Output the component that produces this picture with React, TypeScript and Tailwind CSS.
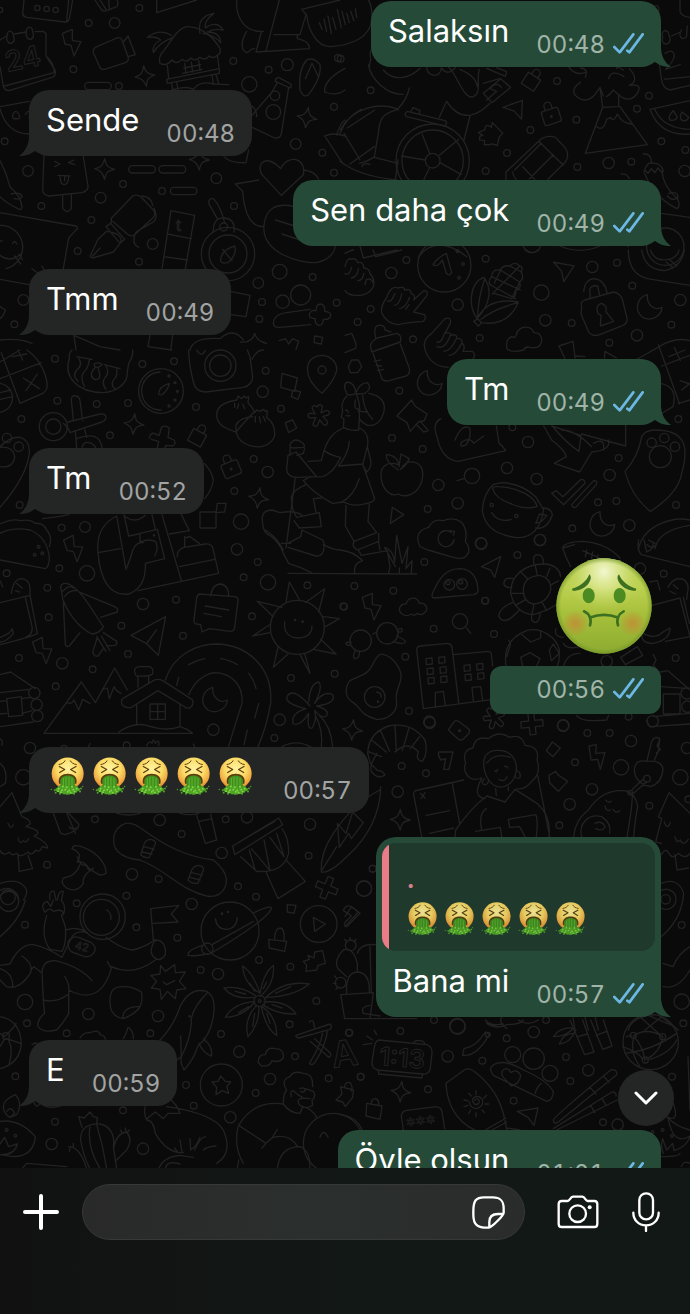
import React, { useId } from "react";

// small shapes that are scattered over the wallpaper, centred on 0,0
const motifs: Record<string, string> = {
  spark: "M0 -30C4 -8 10 -3 30 2C10 6 4 10 0 32C-6 12 -12 6 -30 0C-10 -4 -5 -10 0 -30z",
  bolt: "M-28 -28L2 -40 2 -6 28 -3 7 40 -2 8 -20 4z",
  lock: "M-22 -14H22V26H-22zM-11 -14V-25a11 11 0 0 1 22 0V-14",
  padlock: "M-20 -12H20q6 0 6 6V26q0 6 -6 6H-20q-6 0 -6 -6V-6q0 -6 6 -6zM-12 -12V-24a11 11 0 0 1 22 0V-12M-2 8h4v4h-4z",
  moon: "M-6 -38C-36 -30 -48 8 -20 30C6 44 36 26 38 0C16 12 -8 -6 -6 -38z",
  plus: "M-9 -34H9V-10H33V9H9V32H-9V9H-33V-10H-9z",
  puzzle: "M-32 -20L-10 -22Q-6 -38 6 -28L10 -22 18 -34 36 6 22 14 8 36Q-6 22 -10 26L-28 20-22 8-36 2-32 -8-22 -8z",
  nav: "M-32 -20L30 -20 8 32 -4 2z",
  plane: "M-52 -2L52 -58 30 58 -5 23zM24 -18L-5 23",
  star: "M-6 -28a7 7 0 0 1 14 2L6 -10 20 -18a7 7 0 0 1 8 12L13 0 26 12a7 7 0 0 1-10 11L4 11 0 26a7 7 0 0 1-14-3L-8 6-24 8a7 7 0 0 1-2-14L-11 -5-20 -18a7 7 0 0 1 11-9z",
  pill: "M-29 -11H29a11 11 0 0 1 0 22H-29a11 11 0 0 1 0 -22z",
  cloud: "M-32 22C-48 8 -36 -10 -20 -8C-14 -30 14 -32 20 -10C40 -14 50 8 34 20Q24 28 14 20Q4 30 -4 22Q-18 32 -32 22z",
};

type Scene = {
  at: [number, number];
  lines: string[];
  rings: number[][];
  items?: [string, number, number, number?][];
};

const scenes: Scene[] = [
  {
    // top left: calendar, hut, pen, compass
    at: [0, 0],
    lines: [
      "M72 0L68 42Q70 50 80 52L195 66Q206 66 208 56L218 0M206 0L200 62M285 0L304 28Q308 36 320 32L350 20Q356 14 352 0M300 0l18 28M326 0l2 26",
      "M0 120L20 108M44 102L78 96M106 95L128 94Q138 96 138 104V168L166 212Q168 228 156 232L30 271Q14 274 10 258L0 200M138 168Q164 190 162 218L14 258",
      "M22 100q-6 24 8 30q14 0 12-16l-4-16q-10-10-16 2zM80 88q-6 24 8 30q14 0 12-16l-4-16q-10-10-16 2z",
      "M286 142L350 114Q362 110 366 120L384 170Q388 184 376 188L314 208Q302 210 298 198L280 158Q278 148 286 142zM370 126l14-18l22 56l-22 6",
      "M470 0L470 38L590 0M710 0C706 60 740 98 790 94M838 0L798 152M822 104H900L918 44M740 94C724 120 720 150 740 158C752 156 746 146 764 146M770 156L928 146Q930 124 892 116V104M784 96L768 156",
      "M905 28L920 45C925 90 950 140 990 140C1060 135 1110 110 1115 60Q1118 20 1105 0M905 28L1020 0M958 68l8 20M972 58l8 36M984 48l10 52M998 52l10 36M1012 28l12 56M1026 34l10 40M1040 40l8 28M1052 34l10 28M1066 26l4 26",
      "M480 190Q474 172 488 156C510 130 530 86 560 80C600 78 640 110 660 146Q664 160 652 166Q640 178 628 168Q614 184 600 172Q586 186 572 174Q560 190 546 178Q530 196 516 180Q500 200 480 190z",
      "M502 196l4 40M652 168l6 40M500 238L658 206V220L502 250zM515 250l4 24M530 248l4 20M636 226l4 26M648 224l8 26M516 270Q560 256 580 268Q600 240 640 252L686 254M554 190l4 30M574 186l4 30M596 182l4 30M552 204l50-10M548 220l58-12",
      "M514 106Q480 84 442 112Q468 108 482 120Q454 134 460 158Q476 128 520 112M600 100Q590 48 642 40Q612 60 616 84Q650 60 670 90Q640 84 622 96Q660 96 662 128Q640 104 608 100",
      "M0 320L88 304M0 326Q20 400 86 402M38 346q8 -22 18 -4q8 16 -8 14q-12 2 -10 -10zM76 344q8-16 14 -6M88 336v22",
      "M836 232L872 252Q876 258 870 264L826 244Q824 236 836 232zM832 248L816 276L756 346M866 262L844 402Q840 416 824 414L756 382M756 318Q770 330 770 350",
      "M900 270Q894 210 920 180Q940 170 960 194Q966 230 926 284Q910 296 900 270zM916 236L936 190L956 232M974 276Q970 240 1035 205M974 276Q1010 290 1035 270M1010 405Q1020 370 1035 360M974 408L1028 490M974 408Q1000 396 1035 408",
      "M132 466L128 570Q130 586 148 588L246 578Q266 572 264 558L250 470M188 588L188 624Q200 644 214 626V584M164 484l16 8l-16 8M222 480l-16 8l18 6M174 526L210 528M180 528Q180 552 192 554Q206 552 206 530M194 530v12",
      "M672 470Q690 490 738 488L746 450M0 482Q20 520 30 560Q64 590 66 622Q64 634 50 624Q20 610 0 590M34 582q30-8 32 10q-8 8-24 4",
      "M0 638L228 678Q238 684 226 692L206 714L190 806M0 838L88 854M0 676A66 66 0 0 1 18 806M38 730q6-12 12 2M0 722q4 4 6 0M0 766Q30 790 62 762M44 768l18 24M58 764l10 16M96 806l16 12M126 798l6 12",
      "M270 770L294 718L320 694Q370 700 362 728L340 756L278 774zM278 768L300 744M318 680L332 670L374 718L360 730zM334 668V655L396 590Q410 580 424 592L460 630Q470 642 458 654L404 704Q394 712 382 702L338 664M426 588Q454 590 458 616M462 624Q478 660 452 670L408 696Q392 730 416 742",
      "M513 632L584 646L556 806M513 632L486 806M502 702L574 716M492 770L562 780",
      "M628 614Q622 594 640 596Q660 614 674 668M628 614L652 656M640 696Q638 650 676 654Q708 660 702 696M662 784Q660 752 704 738Q712 764 684 788Q666 792 662 784zM668 748l28 34",
      "M706 552L776 540M706 552L728 574Q736 680 790 680M844 586L786 524C766 490 800 460 842 506C864 460 920 474 910 524zM912 510Q946 514 956 538M884 620Q800 600 792 676C784 760 900 790 950 788Q1000 776 1006 738M826 660L884 678M846 702L900 720",
      "M0 920L16 930Q10 950 0 956M690 874L750 886L738 950L692 944M820 970Q820 944 860 938L930 928M820 970Q822 984 840 982L932 974M932 936q2-6 16-4q0-20 14-20q14 2 12 22q20 2 18 14q-4 12-22 10q-2 20-14 18q-12-4-10-20q-18 0-18-10q0-8 4-10z",
      "M0 1020Q60 1014 96 1030M222 1006L228 1050M222 1006L300 1040L360 1050M450 1006L444 1040L515 1050M518 1004L512 1050M570 1050Q580 1010 660 1016Q700 980 730 1020M722 1026Q756 1030 764 1000Q770 1024 800 1030M838 1022l18-6l10 16l12-16l18 8l-8 24M944 1008l24 4l-4 20l-22-4z",
    ],
    rings: [
      [0, 30, 8], [112, 24, 8], [140, 27, 8], [167, 30, 8], [266, 69, 10], [344, 69, 16], [418, 24, 10], [220, 208, 10], [357, 258, 10],
      [700, 183, 10], [806, 209, 10], [862, 194, 18], [748, 253, 23], [1014, 174, 10], [825, 287, 14], [820, 336, 22], [1002, 320, 10], [887, 432, 16],
      [967, 458, 10], [1002, 518, 10], [14, 424, 10], [84, 513, 16], [369, 552, 10], [302, 593, 16], [124, 618, 10], [274, 660, 10], [486, 573, 10],
      [649, 535, 16], [702, 618, 10], [233, 753, 10], [458, 732, 16], [417, 785, 10], [671, 681, 12], [684, 762, 80], [684, 762, 57], [839, 815, 22],
      [775, 849, 16], [938, 831, 10], [902, 885, 30], [848, 905, 20], [786, 906, 10], [778, 957, 10], [1010, 908, 10], [70, 900, 16], [43, 973, 10],
    ],
    items: [["bolt", 215, 128], ["spark", 435, 227, -8], ["spark", 921, 352, 8], ["spark", 314, 506], ["spark", 598, 478], ["pill", 294, 258], ["pill", 426, 508], ["pill", 517, 508], ["pill", 551, 573]],
  },
  {
    // top right: wheel, pencil, volcano
    at: [1020, 0],
    lines: [
      "M85 195C95 240 140 285 190 283M100 140Q86 156 92 176L88 200M130 210C160 246 210 236 240 205M260 200q0 22 22 26q20 0 22-22M304 204q20 26 42 -2M326 202C350 220 370 300 400 290C426 280 408 240 418 208M360 208Q410 230 412 260M440 205l56 24l4-14l-30-12",
      "M430 280L482 236L512 262L456 308zM440 300l30-26l-20-8q20-24 34-4M450 310Q420 340 390 346Q350 350 320 304L298 352M208 264Q200 300 172 328M390 348L372 420M430 250L478 236",
      "M0 390C40 320 120 306 176 328C124 340 118 360 115 400L103 470M0 400Q20 350 64 328M104 330L22 384M12 400L60 480M103 440L30 492M58 490Q80 486 104 470M0 484Q60 530 170 540M103 472L174 490M66 500q4-14 24-6M174 480L166 538",
      "M205 335L315 362a8 8 0 0 1-5 15L200 350a8 8 0 0 1 5-15zM213 335l5-12l22 8l-2 12M246 402L270 462M356 418L298 466M300 488L364 524M268 504L252 538M256 480L184 468",
      "M498 538L498 516L600 420Q620 404 646 412L676 444Q690 466 676 486L624 538M596 424L670 496M548 500L584 538M518 516Q520 530 528 538M640 464L568 536M604 430L524 510",
      "M686 200Q704 230 740 216M722 246Q688 270 710 290Q744 316 772 274L780 262L790 288M780 262L788 322L836 320V284M800 290Q810 284 820 270L836 284M736 232Q746 206 722 204M836 284Q868 312 890 282Q912 250 868 256M868 256Q900 240 868 206M806 236Q814 206 852 230M850 210Q830 196 830 206M788 322L736 460L922 434L840 320M770 380Q790 396 800 358L812 352Q820 370 832 342Q846 370 874 372",
      "M958 192L964 236Q968 266 990 270L1050 256M974 236Q964 240 1050 230M930 328L1050 302M930 328Q960 410 1050 402M944 328Q970 386 1050 388M1000 332q-18 18 -10 28q14 4 22 -8zM1026 336q-10 20 2 26q14 2 18-10z",
      "M968 110q-4 20 8 22q16 0 14 -18l-6-18q-12-10-18 6zM994 108l28-12M1024 90q-10 20 4 26q14 0 12-18l2-20M1020 0V34Q1024 50 1050 52M975 160q26-16 28 8q-2 16-26 40l44-14",
      "M910 462Q936 460 934 490M912 516Q922 480 944 490Q964 490 970 514M914 510l10 10l10-14l10 12l10-14l10 12M914 520Q940 590 1010 626Q1024 620 1012 596Q970 560 966 514M986 580q28-8 28 12q-14 14-32 -4M844 522Q860 520 868 536M964 640L1050 652M938 20Q960 10 956 34M864 740Q872 684 964 690M60 738L70 774L170 750M236 770Q290 700 380 770M550 740Q560 758 580 758Q598 754 600 740M660 738Q720 764 780 738",
    ],
    rings: [
      [92, 271, 10], [278, 482, 110], [278, 482, 92], [278, 482, 22], [651, 243, 10], [709, 359, 10], [571, 390, 10], [501, 459, 10], [437, 513, 10],
      [712, 501, 10], [806, 489, 17], [874, 485, 10], [891, 326, 10], [927, 287, 10], [964, 424, 10], [1036, 450, 10], [1034, 513, 17], [976, 740, 56], [2, 176, 10], [352, 753, 4],
    ],
    items: [["lock", 576, 240, 33], ["padlock", 631, 340, -18], ["nav", 526, 330, -20], ["puzzle", 452, 406, -20]],
  },
  {
    // left middle: scissors, camera, rocket, sun
    at: [0, 1050],
    lines: [
      "M60 0L0 36M80 0Q126 30 140 92Q146 120 128 130L60 160L4 8M0 86L124 38M36 20l44-8M54 0l14 30M70 84l48 32M112 72L78 122M0 100A44 44 0 0 1 0 187M0 128l32-8M0 148l38-8",
      "M208 26C190 80 230 126 310 128C350 126 384 100 382 66L386 40Q400 20 398 0M208 26Q206 10 216 0M230 20L276 28M236 24Q250 46 230 60Q216 78 234 94M268 30Q264 56 250 68Q240 86 254 110M282 42q16-8 24 2q-8 12-22 6zM286 52q-22 22 -4 36q22 4 16-20l-4-16M312 44L360 56M318 48Q330 70 314 84Q304 100 318 118M350 56Q354 80 340 90Q332 106 344 116",
      "M566 0Q566 40 580 96Q586 124 616 126L730 112Q756 106 758 82L750 20L742 0M756 28Q770 0 790 0M590 0q14 24 26 2",
      "M476 128Q480 108 508 100Q504 120 486 134Q474 136 476 128zM480 66A56 56 0 1 0 484 180",
      "M214 150q0-16 14-12q10 2 12 14l8 60M214 150L220 210M204 216L300 192Q318 190 318 204Q316 212 306 216L210 248Q206 234 190 220M254 238L260 262M226 244L230 294M230 266Q300 240 306 294M246 292q6-22 28-12q12 6 12 14",
      "M0 290Q30 260 60 262Q90 270 88 310Q80 380 0 472M0 350Q40 356 44 320Q40 288 0 292",
      "M448 264q4-20 18-12l12 4l6-24q14-8 24 2l-4 28l18 8q8 10-4 18l-20-2l-4 10M472 294l4-20l-22-6",
      "M760 188Q720 230 708 246C690 240 650 230 650 194Q650 160 710 150L714 138L724 146L732 138L738 144L746 140L744 158Q756 170 764 186M764 188L770 180L780 184L790 178L796 184L802 182L800 202Q826 220 824 256C818 280 790 294 766 290C720 284 706 260 708 226Q716 204 758 200M704 160v12M716 162l-4 14M728 162l6 14M766 200v16M778 200l4 18M790 200l6 14",
      "M966 130Q922 94 922 56C924 24 950 16 966 16C996 18 1012 40 1010 62Q1002 94 966 130zM846 70L892 84L884 124L842 112zM882 120l20 6l-8 22l-20-8l4-18M856 218l22-8l12 24l-24 14z",
      "M0 522Q40 504 60 512Q90 506 106 520Q130 518 140 540Q158 560 148 590M0 550Q40 530 90 540Q140 560 148 620Q148 650 136 656L0 630M128 506Q180 500 206 494",
      "M294 608Q286 530 350 498M294 608L362 596M294 608C300 690 330 740 386 732C420 720 438 690 436 640L494 626L472 538L420 550V576Q450 564 468 576Q476 600 464 618M350 498L378 658Q394 620 398 600Q410 574 430 578M372 494L386 558L416 552M456 494L466 538M486 494L544 692M508 552L568 542L544 494M414 722L656 670L638 592Q630 580 616 582L552 592Q530 600 532 620M538 650L644 628M554 592V560L562 564Q566 554 578 566L598 580M376 500q30 22 60-4M612 340Q634 360 640 390Q636 420 614 446",
      "M600 486L648 486V534H600zM648 488L652 460H678L674 486z",
      "M34 730Q40 686 66 686Q92 690 90 720V734M50 700l16 14M46 722l12 4M0 692L8 710M0 758L90 736L112 850Q100 860 0 884M76 742L96 830Q100 854 76 862M0 862Q34 850 36 836L40 850Q20 876 0 876",
      "M182 710Q186 696 206 702C240 716 270 770 310 830Q300 850 276 852C230 830 200 780 188 746zM188 724q20 -22 32 -10M194 740q14-22 38-18M242 728L344 770Q356 776 352 786L302 802M190 756L196 884Q200 892 208 888L240 848M292 862L278 906Q284 922 294 918L310 896M310 848L350 874Q352 882 346 886L320 888M304 858l26 44M290 860l28 44",
      "M632 738Q636 704 660 702Q686 704 686 740M598 732L704 740Q716 742 714 752L704 832Q702 844 690 844L628 836L606 846L602 824L590 822Q580 820 582 808L590 744Q592 734 598 732zM616 768l70 12M612 790l52 10",
      "M858 756L868 696L898 748M916 758L974 716L956 786M970 800L1018 806L976 830M962 868L1008 912L940 898M900 914L930 970L914 910M834 892L820 952L864 912M810 848L758 858L812 822M820 800L772 754L846 772M854 816Q850 862 894 864Q936 862 936 828",
    ],
    rings: [
      [165, 26, 10], [427, 42, 10], [522, 34, 10], [797, 62, 10], [788, 125, 17], [843, 176, 10], [588, 171, 10], [384, 159, 10], [290, 162, 10], [172, 152, 10],
      [64, 207, 10], [21, 264, 14], [56, 290, 14], [160, 230, 23], [160, 230, 42], [483, 123, 67], [661, 47, 47], [661, 47, 32], [966, 60, 12], [330, 256, 10],
      [761, 327, 10], [803, 366, 17], [703, 423, 10], [59, 465, 10], [185, 533, 10], [255, 531, 16], [723, 515, 23], [711, 598, 17], [773, 636, 10], [731, 682, 10],
      [804, 697, 23], [922, 706, 10], [178, 655, 10], [261, 670, 23], [20, 670, 10], [142, 713, 10], [429, 762, 17], [528, 749, 10], [146, 802, 10], [364, 827, 10],
      [549, 857, 10], [384, 912, 10], [57, 924, 10], [756, 799, 10], [892, 832, 81], [1030, 769, 10],
      [507, 78, 3], [525, 98, 3], [532, 124, 3], [525, 150, 3], [507, 168, 3], [116, 590, 4], [104, 614, 4], [127, 610, 4], [885, 810, 2], [908, 815, 2], [462, 556, 2],
    ],
    items: [["spark", 402, 221, 5], ["lock", 594, 258, 28], ["padlock", 690, 348, -22], ["spark", 776, 443, 8], ["bolt", 221, 596, -5], ["bolt", 128, 902, -5], ["plane", 445, 858], ["star", 956, 198, 6]],
  },
  {
    // hiker, glasses, egg, buildings
    at: [840, 1050],
    lines: [
      "M200 130Q186 100 204 96Q224 100 228 128Q240 98 262 98Q278 116 254 130Q234 134 228 130Q206 140 200 130zM200 138Q180 160 188 182L184 202L192 208L190 232Q210 244 236 240L238 206Q240 190 234 176Q220 180 226 150M230 134Q240 160 240 184L262 186M248 136Q250 180 278 208M266 130Q320 140 312 184Q300 230 262 226Q244 216 238 206M196 180q10 0 8 8M198 196q8 4 12 0",
      "M190 234C150 250 140 280 132 302Q156 318 182 322M240 234Q270 250 262 290L248 344M208 274Q206 310 176 348L248 342L284 446Q282 456 262 460Q220 472 190 456L158 460Q100 430 70 392L90 380M132 302L124 332L84 334M182 322Q160 370 128 380L48 382Q20 380 20 356L24 316L48 306L108 378M262 290L272 330Q276 352 260 366L250 348M36 276q10-12 28 0q12 6 8 16l-36 2q-12-8 0-18zM30 292l0 24M74 296l-4 14l-20 6M46 382L18 594M4 580h28",
      "M78 404Q40 420 34 440Q34 480 50 502L118 488L124 530L58 534L42 512M100 446L108 488M100 446L124 444M66 540L128 570Q136 580 130 604Q124 620 108 618L24 592M66 540L62 560L24 580M-24 480Q-60 480 -52 520Q-50 550 -30 556Q0 580 10 610L26 640Q60 650 94 668M-24 480L0 488Q46 480 66 496M-44 540Q-10 560 10 600",
      "M198 466L196 528L222 574L290 548L264 514L268 462M222 574Q214 590 232 600L296 574V550M236 602L244 616L322 602L330 650L326 668M296 576L300 600M130 584Q160 600 180 600Q220 604 248 632Q220 640 224 668M24 670L410 672M346 650L314 592Q340 600 344 636L350 556L366 640L384 590L378 656L396 632L394 668M358 670V654M238 386Q220 440 182 458",
      "M444 600L420 590C406 560 414 540 446 532Q460 504 490 512Q520 500 544 516Q564 540 556 574Q576 600 560 616Q550 630 520 622zM522 568A24 24 0 1 1 514 548M508 542L524 544L520 556",
      "M464 744Q450 744 460 724C480 680 500 656 540 656C580 658 592 690 594 720Q594 732 580 734z",
      "M278 852L288 848M356 838q14-6 10 6q-8 6-10 0M350 858Q376 868 376 876Q370 886 340 874M214 878q-18-4 -16 4q6 6 14 4M238 904Q240 926 224 926Q216 920 226 902M560 834L572 850",
      "M430 1076L410 900Q410 890 420 888L504 880Q514 882 516 892L536 1058M520 914L626 904Q634 906 634 912L638 948M430 1076L640 1048M466 1068V1028L490 1024L496 1066M580 1052L576 1012L602 1010L608 1050M438 926l18-2 1 18-18 2zM476 922l18-2 1 18-18 2zM441 956l18-2 1 18-18 2zM480 952l18-2 1 18-18 2zM444 984l18-2 1 18-18 2zM482 980l18-2 1 18-18 2zM552 946l18-2 1 18-18 2zM590 942l18-2 1 18-18 2zM555 974l18-2 1 18-18 2zM593 970l18-2 1 18-18 2z",
      "M282 936Q296 906 312 914C340 922 370 960 362 990C350 1030 346 1030 350 1060C350 1090 320 1110 290 1108C240 1096 240 1070 220 1058C190 1040 196 1010 210 992C250 970 260 980 282 936zM290 1026q14 2 14 16",
    ],
    rings: [
      [508, 704, 16], [546, 702, 16], [340, 722, 10], [223, 708, 10], [192, 770, 10], [616, 752, 10], [461, 836, 10], [433, 636, 10], [540, 814, 23],
      [242, 872, 32], [322, 850, 32], [376, 920, 10], [284, 1041, 31], [387, 1083, 10], [448, 1115, 17], [294, 1055, 2], [504, 698, 6], [542, 696, 6],
    ],
    items: [["bolt", 275, 770], ["cloud", 398, 770], ["star", 642, 1104]],
  },
  {
    // right: corn, hands, lock, cup
    at: [1035, 750],
    lines: [
      "M0 50Q6 20 20 28Q34 22 38 38Q56 34 56 54Q76 56 74 70Q90 86 86 108Q70 140 30 136Q10 136 0 122M0 72q14 4 20-20M20 84q18-4 20-28M38 92q16 0 18-22M60 104L64 88Q80 84 84 98",
      "M110 188Q106 170 124 144Q140 104 158 114Q180 108 178 120Q200 116 198 130Q214 136 206 150L236 122Q250 122 246 136L206 186L238 194Q246 206 234 214Q180 218 160 224Q124 220 110 188zM128 152Q138 160 150 130M148 166q16-2 22-34M164 176q18-2 30-34M182 178l10-14",
      "M78 296Q70 280 96 264L156 250Q172 256 166 276L80 306zM92 264Q84 228 100 226Q120 224 120 240L138 246M166 282L192 352Q198 370 184 378L132 392Q114 396 110 384L84 310M88 334l18-4M94 346l16 2M98 362l18-4M0 256L20 250Q40 290 30 296L0 308M20 330H40L50 350L38 368H16L10 350z",
      "M240 298Q230 270 260 250L300 206Q320 200 316 220L300 250Q316 244 318 256Q336 250 336 266Q352 264 352 280Q362 290 354 304L382 304Q394 314 384 326M240 298Q256 350 310 352M276 276q14 4 22-26M276 290q24 10 40 -34M296 304q20 0 38-38M312 316q20 0 38-36",
      "M398 206L386 214L400 228L410 218L398 206M398 206C370 180 370 100 416 82C440 110 440 160 396 206M396 206Q430 140 520 156Q490 230 410 218M408 208Q440 180 518 158M420 84Q400 140 398 200M442 108Q424 100 440 80Q442 56 466 60Q474 44 494 48Q510 32 524 48Q536 50 528 66Q540 84 524 96Q530 116 512 122Q514 140 500 146L446 130M442 108L512 146M440 80L526 120M466 60L524 96M494 48L530 66M524 48L442 132M500 146L524 96M466 62L448 100",
      "M264 44Q276 24 304 10L320 68Q314 80 304 70L292 30Q280 50 268 46zM84 0L92 20L170 0M0 10Q20 0 26 0M540 0q20 16 40 0M850 0Q850 80 920 88L1035 106M890 0Q900 60 960 62Q1010 50 1018 0M916 0Q930 40 980 26Q1000 16 1002 0M964 36l20 18M972 28l24 20",
      "M716 124Q720 88 748 86Q780 90 786 130M736 146L734 118Q740 104 758 108L764 136M710 170Q704 156 720 150L806 126Q826 130 832 148L846 204Q848 220 834 226L764 254Q742 262 730 244L708 192zM758 190Q750 164 770 160Q790 170 782 184L806 214L766 228L768 196L758 190",
      "M486 296Q480 268 500 260Q514 266 514 252C524 224 560 226 566 248Q590 246 590 274Q584 298 556 292Q540 288 536 300Q500 310 486 296zM642 288L684 274L690 324M642 288L660 326M690 318L720 320M778 324L780 304L814 324M872 330L960 280Q1000 262 1035 272M940 284L1004 462M972 320l48-20M988 292l18 40M950 348L1035 316M1006 392l28 10M1010 420L1035 400M1000 460L1035 450M946 400Q1000 410 984 470L950 490",
      "M156 498L200 450L210 468L246 492L238 512L220 516L196 544L186 518zM226 514L250 542L236 546L216 526M288 506Q260 520 276 560Q290 630 340 634L482 602Q474 588 462 580L454 528M330 570Q350 520 374 534Q380 560 364 584Q340 596 350 576Q376 560 386 580L416 558",
      "M160 660Q120 636 124 614Q160 616 162 650L168 612L192 626Q186 644 166 658M160 644C120 630 106 656 108 680C112 720 136 742 160 732Q176 742 196 734C230 720 236 680 232 660C224 632 190 628 172 650",
      "M596 528L620 570Q660 600 664 620L628 640L704 666L740 606Q800 600 790 570M622 528Q660 576 702 604L708 556L620 528M650 540Q690 540 740 590M746 580Q780 560 776 600M842 524V588L710 552",
      "M336 692L356 686M444 704Q416 730 412 780Q420 850 510 862Q580 870 596 780L572 740Q530 700 470 698zM444 718Q440 708 460 710C520 712 570 740 576 770Q540 780 500 762Q450 744 444 718zM594 774Q620 774 622 796Q606 840 572 834M584 792L606 796L590 814L572 820zM440 788Q460 820 500 808",
      "M620 730L634 722L654 740L708 688Q720 688 720 700L656 764zM680 764L746 692Q758 690 754 704L692 772Q682 774 680 764M142 772L176 794L136 820zM840 664Q880 620 890 560Q900 540 930 540Q990 540 1010 570Q1030 600 1010 670Q1000 730 916 784Q860 740 840 664z",
      "M880 898Q890 850 940 824Q990 800 1035 810M930 896Q940 840 1035 826M910 870l20 10M906 884q14 14 28 0",
    ],
    rings: [
      [184, 30, 10], [139, 69, 17], [77, 177, 10], [38, 216, 10], [204, 268, 10], [338, 164, 17], [298, 46, 80], [354, 42, 4], [342, 83, 4], [338, 4, 4], [422, 26, 10],
      [589, 128, 23], [601, 211, 17], [680, 219, 10], [404, 264, 10], [742, 51, 17], [816, 38, 10], [862, 107, 10], [1006, 150, 17], [979, 224, 10], [876, 256, 17], [793, 278, 10],
      [163, 422, 10], [502, 532, 10], [549, 576, 17], [486, 654, 17], [381, 678, 23], [280, 705, 17], [575, 687, 17], [794, 675, 17], [821, 624, 10], [338, 760, 17], [248, 777, 10],
      [409, 881, 17], [585, 870, 17], [682, 835, 10], [853, 826, 17], [759, 757, 10], [814, 753, 10], [993, 765, 10], [1000, 507, 10], [920, 578, 14], [958, 564, 14], [990, 590, 14],
      [946, 620, 33], [440, 765, 5], [514, 798, 5], [141, 564, 10], [233, 597, 10],
    ],
    items: [["moon", 253, 400], ["moon", 913, 172], ["moon", 771, 823], ["nav", 654, 62, 10]],
  },
  {
    // turtle, football, basket
    at: [1320, 1620],
    lines: [
      "M124 80L182 50L164 112L152 90z",
      "M212 160C210 110 250 70 320 72Q360 80 362 110M212 160Q226 220 280 224Q330 210 354 190M250 150Q250 110 300 106Q336 116 332 150Q320 190 280 192Q250 186 250 150zM282 72Q276 44 294 44Q312 46 310 72M220 116Q190 110 192 134Q200 146 216 142M218 188Q180 200 176 228Q186 250 210 236Q230 220 238 210M276 224Q270 246 288 248Q300 240 300 220M240 94l24 24M286 78l6 28M330 84l-10 26M356 122l-26 14M216 160h34M226 196l32-18M276 222l6-30M320 212l-14-26",
      "M368 24Q370 6 430 4Q500 10 540 54M368 24Q376 50 392 80M368 24L404 14M428 32l60 26M440 30l-4 20M458 36l-4 22M474 44l-4 20M596 0Q590 30 604 44L750 80M612 0l8 36Q640 30 640 10",
      "M198 378Q186 300 260 272C300 260 350 290 358 330Q360 360 352 378M246 284L272 306L302 294V272M270 338L300 356L290 378M270 338L242 352L248 378M200 350L212 312L206 300M340 312L358 340L334 362L328 330zM348 266Q340 290 370 292M370 310Q380 330 420 320M420 340Q380 340 370 380",
      "M630 126L652 122L660 150M684 142Q700 110 730 118Q750 130 742 160L740 178M700 134l14 12M690 154l18 8M636 196L720 174L750 290L676 304M730 172L748 250M690 264Q690 300 640 310Q600 310 606 278Q640 300 666 278zM542 352L592 320L608 346L556 374zM640 344L648 360L640 376L652 390M660 396L684 392L750 450M663 440L750 446M670 462h50v60h-50zM640 530L750 520M410 526Q420 548 500 540L506 526",
    ],
    rings: [
      [123, 10, 17], [232, 45, 10], [300, 0, 17], [135, 182, 10], [162, 282, 10], [600, 86, 17],
      [671, 101, 10], [500, 364, 17], [707, 354, 10], [566, 530, 10], [370, 556, 17], [740, 460, 17], [742, 500, 17], [638, 544, 17],
    ],
    items: [["plus", 276, 552, -6]],
  },
  {
    // left: cabin, road, trees, skateboard
    at: [0, 1980],
    lines: [
      "M0 44L32 36L106 86M0 98L86 88M0 124L20 122M0 162L20 160M64 116L92 112M66 160L96 152M0 200L100 186M20 116L64 110L68 166L26 170zM0 236q10 6 6 20M0 310Q24 330 16 370L0 380",
      "M132 220L244 66L286 128L344 24L382 90M132 220H578M200 128Q216 134 222 120L236 150L248 118L270 130M306 90L322 84L328 116L342 80Q350 96 364 100M356 216Q400 186 440 196Q500 216 540 200Q560 206 576 218M410 192V132M540 200V132M414 82V50M446 70V48M368 116L460 62Q474 54 488 62L576 118Q584 130 572 142Q560 148 550 138L474 92L394 142Q376 146 366 134Q362 124 368 116M404 30Q406 20 420 20H448Q462 24 458 42Q450 50 410 48Q404 44 404 30zM450 132h46v46h-46zM473 132v46M450 155h46",
      "M496 60C520 -16 590 -48 650 -48C740 -46 820 20 812 130Q800 200 774 260M530 76L536 52M566 104Q590 50 640 38C700 38 730 80 726 130Q700 210 686 260M566 14Q590 0 614 -4M662 -4Q690 0 712 14M746 40Q762 60 768 86M776 130L764 174M742 210L732 254",
      "M930 138Q880 80 862 108Q850 130 918 146Q870 160 880 192Q900 200 926 160Q920 210 936 204Q952 180 944 152Q970 180 980 166Q990 150 950 138Q1010 130 998 104Q970 90 944 130Q970 80 956 66Q930 70 926 126M946 166Q970 210 964 262M958 166Q994 200 998 262M846 260Q890 236 934 262",
      "M440 258Q446 240 456 250Q460 230 466 250Q480 234 476 256M270 250l-4 10M580 252l4 10",
      "M0 440L36 398L66 470Q94 480 90 492L78 500Q120 510 112 522L102 528Q146 550 142 564L126 560Q120 580 108 570Q94 590 84 576Q60 596 50 580Q34 590 28 576Q10 590 0 572M24 490q8 22 16 4M54 534q4 22 16 8q8 10 16-6M54 584L58 634L98 626L84 586M160 460L182 520L196 524M200 458L226 520M196 524Q240 510 236 492L204 458M208 500q4 10 20 4",
      "M216 566Q220 550 250 562C300 580 320 620 318 640Q300 650 290 640L270 628Q250 600 232 606Q250 580 216 566M232 590Q240 620 260 616Q266 640 280 624M240 614Q226 650 190 654Q180 670 200 684Q230 700 250 670Q246 650 270 632M0 670Q60 650 80 690Q80 710 70 720M0 692A36 36 0 0 1 56 720M150 720Q146 690 162 694L168 720M172 720Q176 690 190 694L184 720",
      "M376 490Q400 486 430 510C500 560 560 590 640 600Q690 640 676 680Q660 714 620 708C540 690 500 630 420 600Q330 590 342 526Q350 500 376 490zM430 560q4-22 22-22q18 4 14 14l-18 40q-14 4-26-8zM426 576l30 6M432 560l30 8M572 640q4-22 24-24q18 4 14 14l-16 40q-18 2-30-10zM570 652l30 8M576 638l30 8",
      "M590 466L616 550L650 540L632 462M540 460q30 8 56 0M598 484L636 476M350 460Q386 470 420 460M698 558L836 474L848 494L704 584zM698 558L824 484M722 590L770 634Q850 640 866 580Q866 530 846 506M748 570L766 632M754 566L810 632L792 540M810 532L852 590L830 520M798 636L834 716L916 664L860 602",
      "M1140 390Q1060 430 1000 520Q960 580 964 636Q990 640 1040 590Q1140 500 1142 380M1012 490L1038 520L1058 456L1090 488L1054 536L1046 520L1018 562L1014 510zM966 630L1010 560",
    ],
    rings: [
      [187, 10, 17], [278, 28, 10], [167, 79, 10], [103, 99, 17], [110, 134, 17], [112, 168, 17], [640, 209, 17], [839, 179, 17], [823, 234, 10], [873, 54, 10], [1004, 41, 10],
      [90, 264, 17], [380, 256, 10], [192, 266, 10], [70, 352, 23], [285, 478, 10], [479, 480, 17], [545, 522, 10], [677, 478, 10], [741, 472, 17], [930, 493, 17],
      [665, 579, 17], [926, 587, 10], [1118, 626, 10], [1092, 686, 23], [396, 643, 17], [476, 657, 10], [714, 679, 10], [141, 614, 10], [379, 707, 10], [768, 710, 10], [24, 712, 22],
    ],
    items: [["moon", 644, 120], ["spark", 1058, 209, 5], ["plus", 980, 684, 22]],
  },
  {
    // right lower: croissant, woman, avocado
    at: [1035, 2160],
    lines: [
      "M76 130L68 100Q70 40 130 18Q200 4 240 60Q250 100 232 124Q210 120 220 96Q190 60 150 96M76 130L96 150M68 94L110 110M80 60L124 96M106 30L134 94M150 14L154 94M192 24L172 92M224 50L196 86M96 100Q70 140 80 156Q100 180 120 164Q110 150 98 152",
      "M282 96H324L312 148H296L302 116L288 120Q276 104 282 96zM310 30L328 4Q334 0 340 4L372 28Q376 36 370 42L354 58Q348 62 340 58z",
      "M410 174C370 190 350 150 362 130Q350 90 384 84Q390 46 430 56Q460 30 494 52Q530 40 540 76Q586 80 576 120Q590 160 560 184Q540 210 516 206M416 130C416 90 450 90 470 92C500 96 516 120 514 150C510 190 480 206 456 200C430 190 416 160 416 130zM424 130Q450 96 496 112M418 176q-12 14 0 18q14 0 12-16M514 150q16 8 10 24q-10 4-16-6M450 152q4 8 8-4M478 140q8-4 10 4M462 178q16 10 24-8M410 176Q380 230 420 236",
      "M426 228L480 246L510 208L576 250Q620 290 612 350M452 206L454 226M490 200V212M426 228Q380 260 332 330L330 350M424 266Q400 280 410 330M392 334L466 322L470 350M490 298L572 284Q580 300 574 350M490 298L494 322L524 320L540 350M578 166L614 350M206 224Q204 212 220 210L356 180M206 224L230 350M322 190L344 310M244 286l70-14M254 340l72-16M226 220l14 14M240 218l-12 18",
      "M604 92L622 66L646 84L624 110zM612 166L632 154L638 164L668 184L640 214L614 188zM732 78L754 74L752 100L780 98L766 148L758 118L738 120zM920 64Q930 46 944 56L940 94L928 120M920 64L906 122M944 60l-8 18l10 10l-12 12M868 150Q870 116 908 124Q950 120 954 148Q950 190 916 200Q870 190 868 150zM862 208L896 176M866 220L904 186M848 216L862 222M904 0L914 20L1035 12",
      "M686 350Q690 300 730 270Q770 210 830 212Q870 210 878 260Q870 300 866 350M862 224Q862 260 846 350M710 350C700 310 730 280 770 290Q800 310 794 340M750 310q20 -10 30 10q-4 16-28 6M780 258q4 18 16 12M804 268q10 14 20 4M782 240q6 10 16 4",
      "M972 218L1035 280M972 218L940 290L950 296L932 366L950 370M958 306q8 26 18 2M990 350q4 22 16 10q8 20 24-2M950 404Q960 380 972 400Q982 420 1000 400Q1020 420 1035 400M990 404L996 450L1030 444M948 490Q1000 470 1016 520Q1010 600 948 650M948 512A30 30 0 1 1 948 564M1035 680Q1000 700 984 740L954 730M954 800Q1000 810 1035 750",
      "M0 590L20 560L40 576L0 620M470 890Q460 910 486 926M520 900q30 20 60 0M690 930L684 894M730 930L720 892M760 930L750 890M850 930Q860 890 930 884M900 930L950 890M948 890L1000 930",
    ],
    rings: [
      [254, 8, 17], [170, 138, 10], [243, 160, 10], [158, 215, 17], [654, 17, 17], [727, 39, 10], [794, 39, 10], [858, 63, 17], [690, 127, 10], [828, 142, 23], [741, 208, 17], [674, 253, 17],
      [643, 316, 10], [913, 257, 10], [1006, 172, 23], [1026, 84, 17], [906, 176, 10], [856, 218, 7], [1030, 238, 10], [83, 446, 10], [57, 506, 23], [962, 538, 14], [1010, 615, 10],
      [1010, 845, 23], [338, 920, 23], [344, 32, 3],
    ],
    items: [["spark", 166, 298]],
  },
  {
    // lower left: astronaut, planet, flower, whale, cactus
    at: [0, 2700],
    lines: [
      "M0 110Q60 60 76 0M134 36Q120 10 142 4L152 20L160 0M136 36Q150 20 160 34Q190 24 190 44Q200 20 184 0M140 46Q120 110 150 148L186 154Q200 130 196 80L184 44M196 90L216 86Q240 84 256 94M320 30Q336 40 332 58M0 196L30 192Q60 130 100 134Q140 142 186 172L216 110Q230 90 262 98M318 112Q370 150 400 150Q440 140 466 118M30 192L40 172M66 168Q100 190 92 218Q60 270 20 260L0 240M0 206Q40 220 38 260M92 210L102 200L122 216M126 214Q130 180 166 182Q240 200 276 242M126 214L130 300Q170 310 206 282Q210 250 194 230M206 270Q300 320 334 206L322 184M334 200Q400 230 466 180M130 300L134 340Q110 360 114 380Q130 400 170 390Q190 370 206 340V284",
      "M452 26L536 16L514 42L534 66L460 70M452 26L460 120M456 140Q460 116 480 122Q500 136 496 164Q480 190 460 170Q450 160 456 140M204 126Q216 106 236 112L274 128Q290 140 284 154Q276 172 254 170L216 156Q202 146 204 126z",
      "M646 56Q650 88 680 88Q710 86 712 52M762 38Q816 12 814 26Q800 60 636 158M608 136Q560 150 564 166Q580 170 622 162M636 134L760 64M940 52L944 94L976 72zM1030 32Q1036 12 1054 20L1080 40L1040 80Q1030 76 1036 66L1054 48L1044 40z",
      "M806 118L860 124L854 154L808 144zM824 116Q824 86 840 84Q854 84 852 120M862 14L888 16L882 40L862 36zM910 184L928 178L924 166L942 174L944 156L968 152L976 190L954 196L950 210L918 214L920 196z",
      "M482 196L496 214L524 194L526 218L556 216L538 244L558 266L530 270L526 296L502 274L484 298L480 268L454 264L470 244L452 226L480 222zM490 246L500 254L524 242M330 306Q328 270 350 262Q390 254 424 276Q430 300 420 320Q410 340 370 356Q330 350 330 306zM368 354Q370 318 420 320",
      "M780 280Q730 250 728 198Q760 220 780 280Q790 220 820 196Q826 250 780 290M796 294Q850 240 928 252Q880 290 800 292M792 306Q860 300 888 342Q830 344 788 314M786 320Q830 350 830 406Q800 390 784 322M776 320Q780 370 744 410Q730 360 768 318M764 306Q730 350 676 352Q700 310 764 304M762 292Q700 300 672 264Q720 256 766 286M750 250l14 24M800 246l-10 20M826 280l46-20M816 314l30 10M800 340l10 30M764 340l-6 40M746 320l-30 18M706 274l30 8",
      "M480 420Q520 380 540 320Q570 260 620 274Q650 290 640 350Q630 410 594 438Q580 480 552 510Q540 490 544 470L530 480M624 276Q570 330 574 370Q570 420 544 470M544 470L542 408M596 430Q610 460 634 468Q640 440 610 416M240 414Q250 396 270 398Q296 386 300 404Q316 408 316 418M370 416Q380 400 384 382Q400 390 400 416",
      "M0 350Q60 360 64 430Q60 490 0 506M0 400L14 410L24 400Q44 380 48 370M20 416L62 430M26 420Q40 450 28 490M14 416L0 440",
      "M888 406L990 372Q998 380 990 388L896 414Q886 412 888 406zM928 366Q936 358 940 366L944 386M968 400Q960 440 928 490Q934 498 944 488Q976 440 982 394M930 424Q950 440 986 472Q996 468 990 458L944 416",
      "M774 486Q776 462 796 464Q800 440 826 446Q852 446 850 472Q840 490 816 482Q810 500 784 498zM662 528L676 544L692 546L680 560L686 580L666 572L648 584L650 562L636 546L654 544z",
      "M1022 284L1120 278L1110 356H1034zM1040 280Q1036 216 1074 216Q1110 220 1108 276M1072 214V190Q1060 140 1030 150Q1000 180 1014 206L1040 230M1072 160Q1080 130 1130 134M1110 140L1114 278M1040 126l-6-8M1050 120V112M1062 126l6-8M1010 236l-6-8M1008 250h-8M1014 262l-6 6M1110 316Q1080 320 1090 340L1140 348M1110 356H1250",
      "M10 620Q10 600 46 584Q70 610 50 644L30 652Q10 640 10 620zM20 634Q34 616 44 640L32 650M0 664Q60 656 106 710Q100 770 40 770L0 764M0 732L14 712L26 740M26 740L52 732Q44 766 0 764M96 434l10-6l10 8M100 600q8 30 20 10q30 20 66 6",
      "M236 650L252 654L270 636L280 650L292 652L290 672M236 650L246 682M242 720C240 680 270 670 300 672C340 680 344 720 340 740L350 806M242 720Q250 770 270 806M270 680Q260 740 300 806M290 674Q310 740 320 806M342 740Q350 700 380 696Q400 720 380 750L350 780M206 740Q240 740 260 806M208 754L212 740M220 730v10M362 690l4 8M376 684l2 10M388 690l-6 8",
      "M436 620Q430 640 440 660Q460 660 466 700Q500 760 550 758M440 656L466 636L490 656L504 640L540 640Q530 610 500 590M500 620Q640 640 670 690Q700 760 650 790M524 744L534 758M540 720L546 756M570 716L572 750Q590 740 600 712M584 750Q600 712 616 710M610 750Q620 740 648 738M476 806Q490 770 540 766L580 772M496 806Q500 780 540 792M66 806L80 790L200 800",
      "M850 612Q760 600 716 676L798 730L816 714L832 688M714 680Q700 740 730 790M798 730L786 744M820 712Q870 700 892 740M850 612Q850 580 860 570Q840 540 870 530Q880 510 910 520Q940 520 938 560M850 612Q870 640 900 640L908 620M874 590Q870 570 880 572Q900 590 906 590M900 566q10-6 16 4q-4 10-14 4M916 566L940 574Q950 590 936 600L938 616Q920 630 900 616Q886 600 906 594L930 596M910 620Q940 630 950 652M832 806Q840 740 900 740Q930 750 930 806M712 806L716 780M960 712q10-30 24 0",
      "M1008 600L1026 582L1022 560L1060 570L1058 592L1036 620L1028 606zM1034 560Q1036 544 1050 548Q1060 560 1054 574M1116 430L1090 434M1118 420L1100 408M1130 404L1122 390",
    ],
    rings: [
      [26, 4, 30], [304, 52, 54], [308, 50, 68], [75, 74, 10], [230, 10, 10], [409, 82, 10], [532, 113, 10], [575, 12, 17], [690, 93, 87], [622, 146, 17], [666, 41, 2], [684, 36, 2], [956, 72, 55],
      [777, 180, 10], [602, 210, 10], [654, 222, 17], [871, 200, 10], [1052, 136, 16], [1022, 248, 16], [949, 303, 10], [869, 373, 10], [663, 402, 10], [718, 455, 17], [1047, 398, 10],
      [885, 469, 10], [75, 306, 23], [265, 342, 17], [81, 370, 10], [200, 400, 10], [474, 348, 17], [451, 400, 10], [779, 303, 17], [779, 303, 4], [664, 555, 63], [558, 555, 10], [810, 537, 17],
      [767, 579, 10], [986, 535, 10], [1082, 530, 10], [581, 617, 10], [691, 652, 17], [369, 631, 10], [165, 665, 10], [155, 732, 17], [429, 746, 17], [46, 529, 10], [18, 408, 10], [1000, 730, 90],
      [20, 690, 4], [46, 707, 4], [569, 349, 2],
    ],
  },
  {
    // lower right: clock, globe, chopsticks, surfboard
    at: [1020, 3060],
    lines: [
      "M116 60L260 74Q278 80 276 100L270 150Q264 164 246 162L112 150Q94 144 96 124L104 76Q108 62 116 60zM222 68Q224 60 240 62Q256 64 254 74M116 150V162L246 174L248 162",
      "M372 86L368 106Q410 110 446 46M372 86Q410 80 436 36L450 44M440 10Q470 30 500 14Q540 14 550 0M436 0Q450 20 490 12M640 50Q660 20 700 24Q680 50 640 50M700 40Q670 40 658 72Q690 70 708 30M690 0L734 104L762 96L728 0M752 0L788 88L816 78L790 0M714 50L742 42M768 46L800 34",
      "M470 130Q440 140 460 166L620 244Q640 240 640 214Q620 180 550 150Q500 120 470 130zM514 198L488 170Q480 150 498 146Q510 148 512 158Q530 144 542 166Q540 190 514 198zM586 220Q590 200 604 190",
      "M318 190L376 148Q390 142 410 160C470 210 490 260 500 330M318 190C320 240 340 300 404 330M436 330L498 294M456 330L500 306M500 324L540 330M404 240q8-8 14 2q0 14-14 10q-12-10-2-20q16-8 26 8q2 20-18 26q-20-2-22-20M408 212v12M386 220l8 8M372 240l12 2M372 260l12-4M386 280l6-10M408 290v-12M434 278l-8-8M446 252h-12M440 226l-8 8",
      "M184 290Q184 276 196 272L288 260Q304 262 306 276L314 326M184 290L190 330M640 300Q640 292 812 150Q832 146 830 164L652 308Q640 312 640 300zM790 168L808 188M750 202L768 222M640 326L816 216Q830 216 828 228M650 330L832 240M752 256L764 278M786 236L798 256M532 274L594 264L582 316L564 292zM80 250L126 258L120 298L78 288zM94 250Q94 236 108 236Q118 242 116 254M0 284Q50 290 66 330",
      "M880 48Q910 80 914 118M880 48Q920 20 968 50M968 50Q960 100 914 120M860 50L874 46M880 58Q870 100 900 140M930 118Q990 100 1010 60M848 80Q900 100 906 116M856 100Q940 90 1010 40M900 -10L960 44M920 -16L1004 20M984 294Q1010 320 1050 330M984 294Q1000 380 1050 348M980 290Q1020 310 1000 250M964 410Q1020 410 1020 400M970 400Q960 380 968 356L980 390L998 370L1002 392Q1040 380 1050 350M1044 110L1050 270M1024 440Q1030 420 1050 430",
    ],
    rings: [
      [28, 38, 10], [181, 33, 10], [352, 18, 23], [443, 44, 7], [500, 55, 10], [581, 36, 17], [323, 109, 17], [427, 122, 10], [518, 104, 24], [581, 116, 32], [630, 160, 24], [678, 111, 10],
      [745, 151, 17], [691, 183, 10], [521, 242, 10], [62, 170, 10], [264, 208, 10], [932, 66, 83], [880, 46, 9], [968, 50, 9], [916, 120, 9], [996, 170, 10], [789, 307, 10], [833, 314, 17],
      [1030, 10, 10], [968, 330, 4], [996, 348, 4], [938, 336, 4], [618, 0, 10], [282, 0, 10],
    ],
    items: [["spark", 183, 214, 5]],
  },
];

const Wallpaper = () => (
  <svg
    className="absolute top-0 left-0 w-full"
    viewBox="0 0 2070 3504"
    fill="none"
    stroke="#222222"
    strokeWidth="4"
    strokeLinejoin="round"
    strokeLinecap="round"
    aria-hidden="true"
  >
    {scenes.map((scene, i) => (
      <g key={i} transform={`translate(${scene.at[0]} ${scene.at[1]})`}>
        {scene.lines.map((d, n) => (
          <path key={n} d={d} />
        ))}
        {scene.rings.map(([cx, cy, r], n) => (
          <circle key={n} cx={cx} cy={cy} r={r} />
        ))}
        {scene.items?.map(([name, x, y, turn = 0], n) => (
          <path key={n} d={motifs[name]} transform={`translate(${x} ${y}) rotate(${turn})`} />
        ))}
      </g>
    ))}
    <g fontFamily="Inter, sans-serif" fontWeight="600" strokeWidth="3">
      <text x="22" y="216" fontSize="84" transform="rotate(-12 22 216)">24</text>
      <text x="222" y="2846" fontSize="34" fontWeight="400" strokeWidth="2" transform="rotate(14 222 2846)">42</text>
      <text x="1136" y="3194" fontSize="76" transform="rotate(5 1136 3194)">1:13</text>
      <text x="528" y="692" fontSize="54" fontWeight="400" fontFamily="Liberation Serif, serif">t</text>
      <text x="1000" y="3204" fontSize="108" transform="rotate(-8 1000 3204)">A</text>
      <text x="1220" y="3398" fontSize="60" fontWeight="400" strokeWidth="2" transform="rotate(-6 1220 3398)">***</text>
    </g>
  </svg>
);

const splat = [
  [22, 98, 6], [32, 103, 6], [43, 105, 7], [55, 106, 7], [66, 104, 7], [77, 101, 6], [85, 97, 5], [28, 92, 6], [40, 94, 7], [54, 94, 8], [68, 94, 7], [79, 91, 5],
  [14, 99, 3], [93, 94, 3], [98, 88, 2], [4, 97, 2], [17, 107, 3], [90, 103, 3], [50, 110, 3], [30, 110, 3], [72, 110, 3],
];

const flecks = [
  [26, 95], [36, 99], [46, 98], [58, 100], [70, 98], [80, 95], [33, 105], [62, 107], [74, 104], [50, 90], [38, 88], [66, 89], [24, 102], [53, 104],
];

const SickEmoji = ({ className }: { className: string }) => {
  const id = useId();
  return (
    <svg className={className} viewBox="0 0 102 113" role="img" aria-label="Face vomiting">
      <defs>
        <radialGradient id={id} cx="0.5" cy="0.35" r="0.66">
          <stop offset="0" stopColor="#fff4a0" />
          <stop offset="0.5" stopColor="#fbdc66" />
          <stop offset="0.82" stopColor="#f0a840" />
          <stop offset="1" stopColor="#d47f22" />
        </radialGradient>
      </defs>
      <circle cx="53" cy="49" r="48" fill={`url(#${id})`} />
      <g fill="none" stroke="#5f3c10" strokeWidth="4" strokeLinecap="round" strokeLinejoin="round">
        <path d="M27 22C35 21 42 17 45 11M61 11C64 17 71 21 79 22" strokeWidth="3" />
        <path d="M28 28L44 37L29 46M78 28L62 37L77 46" />
      </g>
      <path d="M27 80C22 58 38 50 53 50C68 50 84 58 79 80z" fill="#5d3a0e" />
      <path d="M32 82C26 62 40 55 53 55C66 55 80 62 74 82L82 98H22z" fill="#3f8f1f" />
      <path d="M40 64V88M48 60V90M57 60V88M66 64V90" stroke="#62b52f" strokeWidth="3" strokeLinecap="round" />
      {splat.map(([x, y, r], i) => (
        <circle key={i} cx={x} cy={y} r={r} fill="#4fa426" />
      ))}
      {flecks.map(([x, y], i) => (
        <circle key={i} cx={x} cy={y} r="3" fill="#83d544" />
      ))}
    </svg>
  );
};

const NauseatedEmoji = () => (
  <svg className="mr-[9px] size-24" viewBox="0 0 288 288" role="img" aria-label="Nauseated face">
    <defs>
      <linearGradient id="face" x1="0" y1="0" x2="0" y2="1">
        <stop offset="0" stopColor="#b3cb4c" />
        <stop offset="0.3" stopColor="#bdd150" />
        <stop offset="0.6" stopColor="#a5bf3a" />
        <stop offset="1" stopColor="#8dab31" />
      </linearGradient>
      <radialGradient id="shine" cx="0.5" cy="0.14" r="0.42">
        <stop offset="0" stopColor="#f4f7d0" />
        <stop offset="0.4" stopColor="#e3eda0" stopOpacity="0.7" />
        <stop offset="1" stopColor="#c3d75e" stopOpacity="0" />
      </radialGradient>
      <radialGradient id="rim" cx="0.5" cy="0.5" r="0.5">
        <stop offset="0.9" stopColor="#6b9024" stopOpacity="0" />
        <stop offset="1" stopColor="#6b9024" stopOpacity="0.6" />
      </radialGradient>
      <radialGradient id="cheek">
        <stop offset="0" stopColor="#c48a34" stopOpacity="0.85" />
        <stop offset="1" stopColor="#c48a34" stopOpacity="0" />
      </radialGradient>
    </defs>
    <circle cx="144" cy="144" r="143" fill="url(#face)" />
    <circle cx="144" cy="144" r="143" fill="url(#shine)" />
    <circle cx="144" cy="144" r="143" fill="url(#rim)" />
    <circle cx="58" cy="196" r="40" fill="url(#cheek)" />
    <circle cx="230" cy="196" r="40" fill="url(#cheek)" />
    <ellipse cx="98" cy="113" rx="18" ry="23" fill="#4c8a22" />
    <ellipse cx="191" cy="113" rx="18" ry="23" fill="#4c8a22" />
    <g fill="#3d7020">
      <path d="M48 92C72 86 92 70 100 49C106 54 106 64 99 74C88 90 70 98 50 98z" />
      <path d="M241 92C217 86 197 70 189 49C183 54 183 64 190 74C201 90 219 98 239 98z" />
    </g>
    <path
      d="M84 160C100 167 108 184 102 202M203 160C188 167 180 184 186 202M105 178C128 168 160 168 183 178"
      fill="none"
      stroke="#3d7020"
      strokeWidth="8"
      strokeLinecap="round"
    />
  </svg>
);

const Ticks = () => (
  <svg className="mb-[3px] h-[21px] w-[31px]" viewBox="0 0 93 63" fill="none" stroke="#6cb7e3" strokeWidth="8" strokeLinecap="round" strokeLinejoin="round" role="img" aria-label="Read">
    <path d="M4 42L20 58L61 4M43 53L49 58L89 4" />
  </svg>
);

const Time = ({ value, mine }: { value: string; mine?: boolean }) => (
  <span className={mine ? "flex items-end gap-2 text-[#a0b4a8]" : "flex items-end text-[#a2a4a3]"}>
    <time className="text-[24px] leading-6 tabular-nums">{value}</time>
    {mine && <Ticks />}
  </span>
);

const Tail = ({ mine }: { mine?: boolean }) => (
  <svg
    className={mine ? "absolute -right-[10px] bottom-0 h-5 w-5 text-[#264a38]" : "absolute bottom-0 -left-[10px] h-5 w-5 -scale-x-100 text-[#242625]"}
    viewBox="0 0 20 20"
    fill="currentColor"
    aria-hidden="true"
  >
    <path d="M0 0H10C10 8 13 15 20 20C13 20 8 18 4 15L0 17z" />
  </svg>
);

type BubbleProps = {
  time: string;
  mine?: boolean;
  quote?: React.ReactNode;
  children: React.ReactNode;
};

const Bubble = ({ time, mine, quote, children }: BubbleProps) => (
  <li
    className={
      mine
        ? "relative mt-6 self-end rounded-[20px] bg-[#264a38]"
        : "relative mt-[23px] self-start rounded-[20px] bg-[#242625]"
    }
  >
    {quote}
    <div className="flex items-end justify-between gap-[27px] px-[17px] py-[10px]">
      <p className="mb-[6px] flex h-10 text-[31px] leading-10 text-white">{children}</p>
      <Time value={time} mine={mine} />
    </div>
    <Tail mine={mine} />
  </li>
);

const five = [0, 1, 2, 3, 4];

const Quote = () => (
  <div className="px-[6px] pt-[6px]">
    <blockquote className="flex overflow-hidden rounded-[14px] bg-[#1f392c]">
      <div className="w-[7px] bg-[#e97c86]" />
      <div className="pt-5 pb-4 pl-[18px]">
        <p className="text-[26px] leading-8 font-semibold text-[#d9808a]">.</p>
        <p className="mt-[7px] flex gap-[7px]">
          {five.map((n) => (
            <SickEmoji key={n} className="h-[33px] w-[30px] opacity-90" />
          ))}
        </p>
      </div>
    </blockquote>
  </div>
);

const Composer = () => (
  <footer className="relative bg-linear-to-r from-[#111111] to-[#121816] to-50% pt-4 pr-[30px] pb-[74px] pl-[23px]">
    <form className="flex items-center" onSubmit={(e) => e.preventDefault()}>
      <button type="button" aria-label="Attach" className="mr-[23px]">
        <svg className="size-9" viewBox="0 0 36 36" fill="none" stroke="#fff" strokeWidth="4" strokeLinecap="round">
          <path d="M18 2V34M2 18H34" />
        </svg>
      </button>
      <div className="flex h-14 min-w-0 flex-1 items-center rounded-full border border-[#363938] bg-linear-to-r from-[#292929] via-[#2b2f2e] to-[#292c2b] pr-[19px] pl-6">
        <input aria-label="Message" className="min-w-0 flex-1 bg-transparent text-[31px] text-white outline-none" />
        <button type="button" aria-label="Stickers">
          <svg className="size-[33px]" viewBox="0 0 99 99" fill="none" stroke="#fff" strokeWidth="7" strokeLinejoin="round">
            <path d="M4 46C4 14 12 4 36 4H62C86 4 95 14 95 38V50C95 58 60 94 50 95C16 96 4 86 4 56zM52 94V78C52 60 62 54 78 54H94" />
          </svg>
        </button>
      </div>
      <button type="button" aria-label="Camera" className="ml-8">
        <svg className="h-[34px] w-[42px]" viewBox="0 0 126 102" fill="none" stroke="#fff" strokeWidth="7" strokeLinejoin="round">
          <path d="M14 18H32C38 18 40 6 48 5H76C84 6 86 18 92 18H112Q121 18 121 28V86Q121 96 112 96H14Q5 96 5 86V28Q5 18 14 18z" />
          <circle cx="62" cy="56" r="25" />
          <circle cx="98" cy="37" r="6" fill="#fff" stroke="none" />
        </svg>
      </button>
      <button type="button" aria-label="Record" className="ml-[33px]">
        <svg className="h-10 w-7" viewBox="0 0 84 120" fill="none" stroke="#fff" strokeWidth="7" strokeLinecap="round">
          <rect x="22" y="4" width="41" height="78" rx="20" />
          <path d="M4 62C4 84 20 100 42 100C64 100 80 84 80 62M42 100V117" />
        </svg>
      </button>
    </form>
  </footer>
);

export default function App() {
  return (
    <div className="flex h-screen flex-col bg-[#0a0a0a] font-['Inter',sans-serif]">
      <main className="relative min-h-0 flex-1 overflow-hidden">
        <Wallpaper />
        <ol className="relative -mt-[23px] flex flex-col px-[29px]">
          <Bubble mine time="00:48">Salaksın</Bubble>
          <Bubble time="00:48">Sende</Bubble>
          <Bubble mine time="00:49">Sen daha çok</Bubble>
          <Bubble time="00:49">Tmm</Bubble>
          <Bubble mine time="00:49">Tm</Bubble>
          <Bubble time="00:52">Tm</Bubble>
          <li className="mt-11 mb-[10px] flex flex-col items-end">
            <NauseatedEmoji />
            <div className="mt-3 rounded-xl bg-[#264a38] py-3 pr-[17px] pl-[46px]">
              <Time mine value="00:56" />
            </div>
          </li>
          <Bubble time="00:57">
            {five.map((n) => (
              <SickEmoji key={n} className="h-[38px] w-[42px] px-1" />
            ))}
          </Bubble>
          <Bubble mine time="00:57" quote={<Quote />}>
            Bana mi
          </Bubble>
          <Bubble time="00:59">E</Bubble>
          <Bubble mine time="01:01">Öyle olsun</Bubble>
        </ol>
        <button
          type="button"
          aria-label="Scroll to latest"
          className="absolute right-4 bottom-[42px] flex size-14 items-center justify-center rounded-full bg-[#242625]"
        >
          <svg className="h-[14px] w-6" viewBox="0 0 24 14" fill="none" stroke="#fff" strokeWidth="3" strokeLinecap="round" strokeLinejoin="round">
            <path d="M2 2L12 12L22 2" />
          </svg>
        </button>
      </main>
      <Composer />
    </div>
  );
}
